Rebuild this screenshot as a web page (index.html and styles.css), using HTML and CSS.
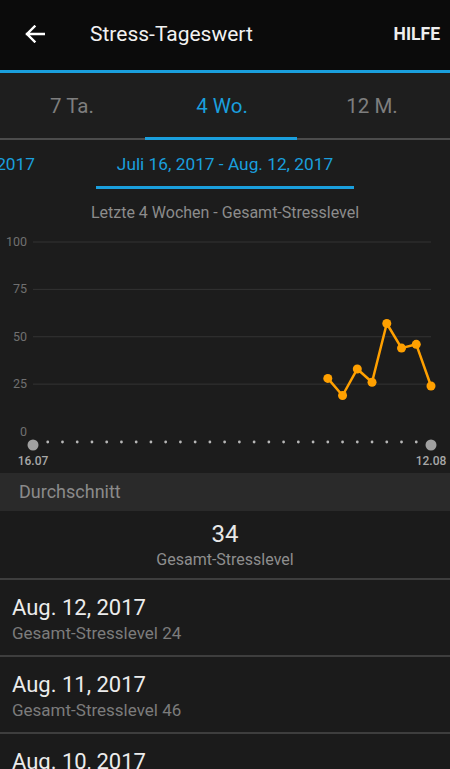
FILE: index.html
```html
<!DOCTYPE html>
<html lang="de">
<head>
  <meta charset="UTF-8" />
  <title>Stress-Tageswert</title>
  <link rel="stylesheet" href="styles.css">
</head>
<body>
  <header class="topbar">
    <svg class="back" width="20" height="18" viewBox="0 0 20 18">
      <path d="M19 9H2M9.5 1.5L2 9l7.5 7.5" fill="none" stroke="#fff" stroke-width="2.4" stroke-linecap="square"/>
    </svg>
    <h1>Stress-Tageswert</h1>
    <span class="help">HILFE</span>
  </header>

  <nav class="tabs">
    <div class="tab">7 Ta.</div>
    <div class="tab active">4 Wo.</div>
    <div class="tab">12 M.</div>
  </nav>

  <div class="ranges">
    <div class="range-side"><span class="range">Juni 18, 2017 - Juli 15, 2017</span></div>
    <span class="range current">Juli 16, 2017 - Aug. 12, 2017</span>
    <div class="range-side"></div>
  </div>

  <section class="chart">
    <div class="chart-title">Letzte 4 Wochen - Gesamt-Stresslevel</div>
    <svg id="plot" width="450" height="249" viewBox="0 0 450 249"></svg>
  </section>

  <div class="section-head">Durchschnitt</div>
  <div class="average">
    <div class="avg-value">34</div>
    <div class="avg-label">Gesamt-Stresslevel</div>
  </div>

  <ul class="days">
    <li><div class="day-date">Aug. 12, 2017</div><div class="day-sub">Gesamt-Stresslevel 24</div></li>
    <li><div class="day-date">Aug. 11, 2017</div><div class="day-sub">Gesamt-Stresslevel 46</div></li>
    <li><div class="day-date">Aug. 10, 2017</div><div class="day-sub">Gesamt-Stresslevel 46</div></li>
  </ul>

  <script>
    const svg = document.getElementById("plot");
    const NS = "http://www.w3.org/2000/svg";
    const left = 33, step = 398 / 27, zeroY = 207.5, unit = 1.895;

    function el(name, attrs, text) {
      const node = document.createElementNS(NS, name);
      for (const k in attrs) node.setAttribute(k, attrs[k]);
      if (text) node.textContent = text;
      svg.appendChild(node);
      return node;
    }

    // Gitterlinien + Beschriftung
    [100, 75, 50, 25, 0].forEach(v => {
      const y = zeroY - v * unit;
      if (v > 0) el("line", { x1: left, x2: 431, y1: y, y2: y, class: "grid" });
      el("text", { x: 27, y: y + 4, class: "ylabel" }, String(v));
    });

    // Tagespunkte auf der Achse
    for (let i = 1; i < 27; i++) {
      el("circle", { cx: left + i * step, cy: 218, r: 1.4, class: "tick" });
    }
    el("circle", { cx: left, cy: 221, r: 5.5, class: "end" });
    el("circle", { cx: left + 27 * step, cy: 221, r: 5.5, class: "end" });
    el("text", { x: left, y: 241, class: "xlabel" }, "16.07");
    el("text", { x: left + 27 * step, y: 241, class: "xlabel" }, "12.08");

    // Stresswerte der letzten Tage
    const values = [28, 19, 33, 26, 57, 44, 46, 24];
    const pts = values.map((v, i) => [left + (20 + i) * step, zeroY - v * unit]);
    el("polyline", { points: pts.map(p => p.join(",")).join(" "), class: "series" });
    pts.forEach(p => el("circle", { cx: p[0], cy: p[1], r: 4.5, class: "dot" }));
  </script>
</body>
</html>
```

FILE: styles.css
```css
* {
  box-sizing: border-box;
}
html, body {
  margin: 0;
  padding: 0;
}
body {
  width: 450px;
  height: 769px;
  overflow: hidden;
  background: #1b1b1b;
  font-family: Roboto, "Noto Sans", sans-serif;
  color: #e6e6e6;
}
.topbar {
  height: 73px;
  display: flex;
  align-items: center;
  padding: 0 10px 3px 25px;
  background: #0b0b0b;
  border-bottom: 3px solid #1a9fdd;
}
.back {
  display: block;
  margin-top: 1px;
}
.topbar h1 {
  flex: 1;
  margin: 0 0 0 45px;
  font-size: 21px;
  font-weight: 400;
  color: #f2f2f2;
}
.help {
  font-size: 17.5px;
  font-weight: 700;
  color: #eeeeee;
}
.tabs {
  display: flex;
  height: 67px;
  background: #1e1e1e;
  border-bottom: 2px solid #4c4c4c;
}
.tab {
  position: relative;
  flex: 1;
  display: flex;
  align-items: center;
  justify-content: center;
  padding-right: 6px;
  font-size: 20.5px;
  color: #7e7e7e;
}
.tab.active {
  color: #1a9fdd;
}
.tab.active::after {
  content: "";
  position: absolute;
  left: -5px;
  right: 3px;
  bottom: -2px;
  height: 3px;
  background: #1a9fdd;
}
.ranges {
  display: grid;
  grid-template-columns: 1fr auto 1fr;
  height: 50px;
  background: #1c1c1c;
}
.range-side {
  display: flex;
  justify-content: flex-end;
  overflow: hidden;
}
.range {
  flex-shrink: 0;
  padding: 14px 20px 0;
  font-size: 17.3px;
  color: #1a9fdd;
  white-space: nowrap;
}
.range-side .range {
  padding-right: 61px;
}
.range.current {
  width: 258px;
  padding: 14px 0 0;
  text-align: center;
  border-bottom: 3px solid #1a9fdd;
  margin-bottom: 1px;
}
.chart {
  height: 283px;
  background: #1c1c1c;
}
.chart-title {
  padding-top: 13px;
  height: 34px;
  line-height: 20px;
  text-align: center;
  font-size: 16px;
  color: #8c8c8c;
}
#plot {
  display: block;
}
.grid {
  stroke: #333333;
  stroke-width: 1;
}
.ylabel {
  font-size: 12.5px;
  fill: #707070;
  text-anchor: end;
}
.xlabel {
  font-size: 12px;
  font-weight: 500;
  fill: #a8a8a8;
  text-anchor: middle;
}
.tick {
  fill: #b8b8b8;
}
.end {
  fill: #a0a0a0;
}
.series {
  fill: none;
  stroke: #ffa000;
  stroke-width: 2.5;
  stroke-linejoin: round;
}
.dot {
  fill: #ffa000;
}
.section-head {
  height: 38px;
  padding-left: 19px;
  line-height: 38px;
  font-size: 18px;
  color: #8a8a8a;
  background: #2a2a2a;
}
.average {
  height: 69px;
  padding-top: 8px;
  text-align: center;
  border-bottom: 2px solid #3e3e3e;
}
.avg-value {
  font-size: 24px;
  line-height: 30px;
  color: #e8e8e8;
}
.avg-label {
  font-size: 16px;
  line-height: 22px;
  color: #8e8e8e;
}
.days {
  list-style: none;
  margin: 0;
  padding: 0;
}
.days li {
  height: 77px;
  padding: 13px 12px 0;
  border-bottom: 2px solid #3e3e3e;
}
.day-date {
  font-size: 22px;
  line-height: 29px;
  color: #ececec;
}
.day-sub {
  font-size: 17px;
  line-height: 22px;
  color: #7c7c7c;
}
```
